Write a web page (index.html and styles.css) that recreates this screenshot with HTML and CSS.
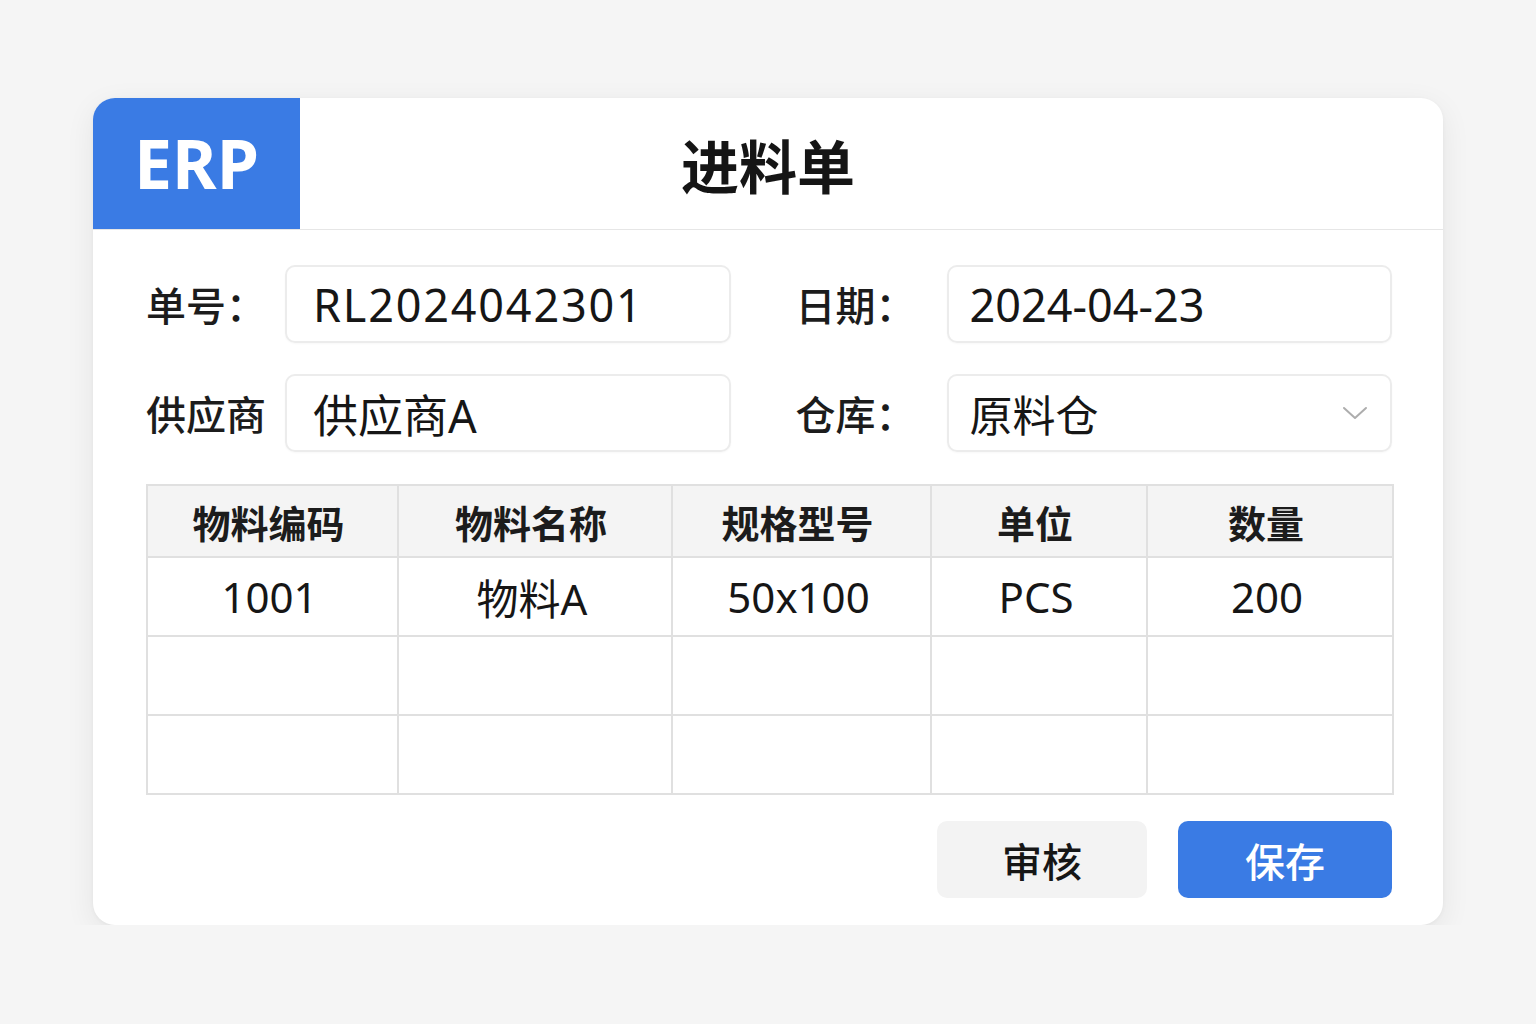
FILE: index.html
```html
<!DOCTYPE html>
<html lang="zh-CN">
<head>
<meta charset="utf-8">
<title>进料单</title>
<link rel="stylesheet" href="styles.css">
</head>
<body>
<div class="card">
  <div class="header">
    <div class="logo">ERP</div>
    <div class="title">进料单</div>
    <div class="spacer"></div>
  </div>
  <div class="body">
    <div class="form">
      <div class="label">单号：</div>
      <div class="field field-left field-code">RL2024042301</div>
      <div class="label label-right">日期：</div>
      <div class="field field-right">2024-04-23</div>
      <div class="label">供应商</div>
      <div class="field field-left">供应商A</div>
      <div class="label label-right">仓库：</div>
      <div class="field field-right field-select">
        <span>原料仓</span>
        <svg class="chevron" width="26" height="16" viewBox="0 0 26 16"><polyline points="2,3 13,13 24,3" fill="none" stroke="#adadad" stroke-width="2" stroke-linecap="round" stroke-linejoin="round"/></svg>
      </div>
    </div>
    <table class="grid">
      <colgroup>
        <col class="c1"><col class="c2"><col class="c3"><col class="c4"><col class="c5">
      </colgroup>
      <thead>
        <tr><th>物料编码</th><th>物料名称</th><th>规格型号</th><th>单位</th><th>数量</th></tr>
      </thead>
      <tbody>
        <tr><td>1001</td><td>物料A</td><td>50x100</td><td>PCS</td><td>200</td></tr>
        <tr class="empty"><td></td><td></td><td></td><td></td><td></td></tr>
        <tr class="empty"><td></td><td></td><td></td><td></td><td></td></tr>
      </tbody>
    </table>
    <div class="actions">
      <button class="btn btn-secondary">审核</button>
      <button class="btn btn-primary">保存</button>
    </div>
  </div>
</div>
</body>
</html>
```

FILE: styles.css
```css
html, body {
  margin: 0;
  padding: 0;
  background: #f5f5f5;
  font-family: "Noto Sans", "Noto Sans CJK SC", sans-serif;
  color: #1a1a1a;
}

body {
  padding: 98px 0 0 93px;
}

.card {
  width: 1350px;
  background: #ffffff;
  border-radius: 22px;
  box-shadow: 0 8px 30px rgba(0, 0, 0, 0.07), 0 1px 4px rgba(0, 0, 0, 0.04);
  overflow: hidden;
}

.header {
  display: grid;
  grid-template-columns: 207px 1fr 207px;
  height: 131px;
  border-bottom: 1px solid #e6e6e6;
}

.logo {
  background: #3a7be4;
  color: #ffffff;
  font-weight: 700;
  font-size: 68px;
  display: flex;
  align-items: center;
  justify-content: center;
  line-height: 1;
  padding-bottom: 2px;
}

.title {
  display: flex;
  align-items: center;
  justify-content: center;
  font-family: "Noto Sans CJK SC", sans-serif;
  font-size: 58px;
  font-weight: 700;
  color: #151515;
  line-height: 1;
}

.body {
  padding: 35px 51px 27px 53px;
}

.form {
  display: grid;
  grid-template-columns: 139px 1fr 216px 1fr;
  grid-auto-rows: 78px;
  row-gap: 31px;
}

.label {
  display: flex;
  align-items: center;
  font-family: "Noto Sans CJK SC", sans-serif;
  font-size: 40px;
  font-weight: 500;
  color: #1c1c1c;
}

.label-right {
  padding-left: 65px;
}

.field {
  display: flex;
  align-items: center;
  border: 2px solid #ececec;
  border-radius: 10px;
  font-size: 45px;
  color: #161616;
  box-shadow: 0 1px 2px rgba(0, 0, 0, 0.03);
}

.field-left {
  padding: 0 26px;
}

.field-right {
  padding: 0 22px 0 21px;
}

.field-code {
  letter-spacing: 1.8px;
}

.field-select {
  justify-content: space-between;
  font-size: 43px;
}

.grid {
  margin-top: 32px;
  width: 100%;
  border-collapse: collapse;
  table-layout: fixed;
}

.c1 { width: 251px; }
.c2 { width: 274px; }
.c3 { width: 259px; }
.c4 { width: 216px; }
.c5 { width: 246px; }

.grid th,
.grid td {
  border: 2px solid #e0e0e0;
  text-align: center;
  padding: 0;
}

.grid th {
  background: #f4f4f4;
  height: 70px;
  font-family: "Noto Sans CJK SC", sans-serif;
  font-size: 38px;
  font-weight: 700;
  color: #1c1c1c;
  padding-right: 8px;
}

.grid td {
  height: 77px;
  font-size: 42px;
  font-weight: 400;
  color: #161616;
  padding-right: 6px;
}

.actions {
  margin-top: 26px;
  display: flex;
  justify-content: flex-end;
  gap: 31px;
}

.btn {
  height: 77px;
  border: none;
  border-radius: 10px;
  font-family: "Noto Sans CJK SC", sans-serif;
  font-size: 40px;
  font-weight: 500;
  padding: 0;
  cursor: pointer;
}

.btn-secondary {
  width: 210px;
  background: #f3f3f3;
  color: #161616;
}

.btn-primary {
  width: 214px;
  background: #3a7be4;
  color: #ffffff;
}
```
